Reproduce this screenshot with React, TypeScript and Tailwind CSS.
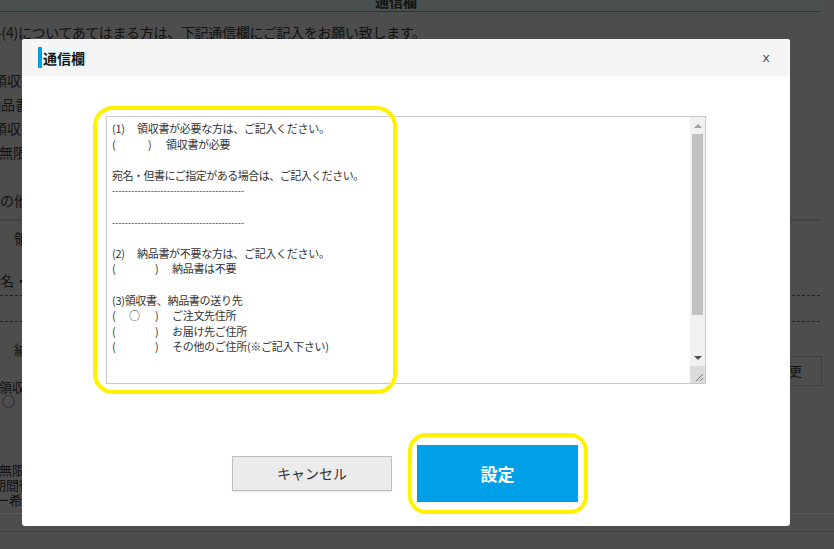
import React from "react";

const jp = "font-['Noto_Sans_CJK_JP','Noto_Sans',sans-serif]";

function Row({ h, className = "", children }: { h: string; className?: string; children?: React.ReactNode }) {
  return <div className={`flex items-center whitespace-nowrap ${h} ${className}`}>{children}</div>;
}

function Background() {
  return (
    <div className="flex flex-col w-[834px] h-[549px] text-[#121212] text-[14px]">
      <div className="w-[820px] h-[12px] bg-[#4a5050] border-b border-[#2f3232] overflow-hidden flex justify-center">
        <span className="font-bold text-[14px] leading-[14px] -mt-[6px] -ml-[28px]">通信欄</span>
      </div>
      <Row h="h-[24px]" className="mt-[8px] tracking-[-0.3px] -ml-[3px]">-(4)についてあてはまる方は、下記通信欄にご記入をお願い致します。</Row>
      <div className="h-[24px]" />
      <Row h="h-[24px]" className="-ml-[7px]">領収書</Row>
      <Row h="h-[24px]" className="-ml-[13px]">納品書</Row>
      <Row h="h-[24px]" className="-ml-[7px]">領収書</Row>
      <Row h="h-[24px]" className="-ml-[1px]">無限</Row>
      <div className="h-[24px]" />
      <Row h="h-[24px]" className="-ml-[14px]">その他</Row>
      <div className="mt-[7px] w-[820px] border-t-2 border-[#444]" />
      <Row h="h-[24px]" className="mt-[5px] pl-[14px]">領</Row>
      <div className="h-[18px]" />
      <Row h="h-[24px]" className="-ml-[14px]">宛名・但</Row>
      <div className="mt-[3px] w-[820px] border-t border-dashed border-[#222]" />
      <div className="mt-[25px] w-[820px] border-t border-dashed border-[#222]" />
      <div className="flex justify-between w-[822px] mt-[15px]">
        <Row h="h-[24px]" className="pl-[14px]">納</Row>
        <div className="mt-[19px] w-[64px] h-[30px] border border-[#3d3d3d] flex items-center justify-end pr-[19px] text-[13px] whitespace-nowrap">変更</div>
      </div>
      <div className="mt-[-6px] flex flex-col text-[13px] leading-[14px]">
        <span className="-ml-[1px]">領収</span>
        <span className="ml-[2px]">○</span>
      </div>
      <div className="mt-[54px] flex flex-col text-[13px] leading-[15px]">
        <span className="-ml-[1px]">無限</span>
        <span className="-ml-[7px]">期間後</span>
        <span className="-ml-[4px]">ー希</span>
      </div>
      <div className="mt-[6px] w-[834px] border-t border-[#5c5c5c]" />
      <div className="mt-[17px] w-[834px] border-t border-[#404040]" />
    </div>
  );
}

function Paren({ close, gap, mark, children }: { close: number; gap: number; mark?: string; children: React.ReactNode }) {
  return (
    <div className="flex">
      <span className="inline-block w-[17px]">(</span>
      <span className="inline-block" style={{ width: close - 17 }}>{mark ?? ""}</span>
      <span className="inline-block" style={{ width: gap - close }}>)</span>
      <span>{children}</span>
    </div>
  );
}

function Scrollbar() {
  return (
    <div className="w-[15px] flex flex-col bg-[#f1f1f1]">
      <div className="h-[17px] flex items-center justify-center">
        <div className="w-0 h-0 border-l-[4px] border-r-[4px] border-b-[4px] border-l-transparent border-r-transparent border-b-[#a3a3a3]" />
      </div>
      <div className="mx-[2px] h-[181px] bg-[#c1c1c1]" />
      <div className="flex-1" />
      <div className="h-[17px] flex items-center justify-center">
        <div className="w-0 h-0 border-l-[4px] border-r-[4px] border-t-[4px] border-l-transparent border-r-transparent border-t-[#505050]" />
      </div>
      <div className="h-[17px] bg-[#dcdcdc] flex items-end justify-end p-[1px]">
        <svg width="12" height="12" viewBox="0 0 12 12">
          <path d="M11 4 L4 11 M11 8 L8 11" stroke="#777" strokeWidth="1" />
        </svg>
      </div>
    </div>
  );
}

function TextBox() {
  const dash = "-----------------------------------------";
  return (
    <div className="w-[600px] h-[268px] border border-[#c9c9c9] flex bg-white">
      <div className={`flex-1 pl-[5px] pt-[4px] text-[11px] leading-[15.6px] text-[#333] whitespace-pre tracking-[-0.3px] ${jp}`}>
        <div className="flex"><span className="inline-block w-[25px]">(1)</span><span>領収書が必要な方は、ご記入ください。</span></div>
        <Paren close={36} gap={54}>領収書が必要</Paren>
        <div>&nbsp;</div>
        <div className="tracking-[-0.5px]">宛名・但書にご指定がある場合は、ご記入ください。</div>
        <div className="text-[9px] tracking-[0.1px]">{dash}</div>
        <div>&nbsp;</div>
        <div className="text-[9px] tracking-[0.1px]">{dash}</div>
        <div>&nbsp;</div>
        <div className="flex"><span className="inline-block w-[25px]">(2)</span><span>納品書が不要な方は、ご記入ください。</span></div>
        <Paren close={43} gap={60}>納品書は不要</Paren>
        <div>&nbsp;</div>
        <div>(3)領収書、納品書の送り先</div>
        <Paren close={43} gap={60} mark="○">ご注文先住所</Paren>
        <Paren close={43} gap={60}>お届け先ご住所</Paren>
        <Paren close={43} gap={60}>その他のご住所(※ご記入下さい)</Paren>
      </div>
      <Scrollbar />
    </div>
  );
}

export default function App() {
  return (
    <div className={`relative w-[834px] h-[549px] overflow-hidden bg-[#4d4d4d] ${jp}`}>
      <Background />
      <div className="absolute left-[22px] top-[39px] w-[768px] h-[487px] bg-white rounded-[3px] flex flex-col overflow-hidden">
        <div className="h-[37px] bg-[#f5f5f5] flex items-center pl-[16px] pr-[20px]">
          <div className="w-[4px] h-[21px] bg-[#00a0e9]" />
          <span className="ml-[1px] bg-[#ecf9fc] text-[14px] font-bold text-[#1a1a1a] leading-[20px]">通信欄</span>
          <div className="flex-1" />
          <span className="text-[13px] text-[#555] leading-none font-['DejaVu_Sans',sans-serif]">x</span>
        </div>
        <div className="pl-[84px] mt-[40px]">
          <TextBox />
        </div>
        <div className="mt-[61px] flex items-center justify-center gap-[25px] pr-[2px]">
          <button className="w-[160px] h-[35px] bg-[#ebebeb] border border-[#bdbdbd] text-[14px] text-[#333] shadow-[0_1px_1px_rgba(0,0,0,0.08)]">キャンセル</button>
          <button className="w-[161px] h-[57px] bg-[#00a0e8] text-[17px] font-bold text-white">設定</button>
        </div>
        <div className="absolute left-[71px] top-[67px] w-[304px] h-[288px] border-[4px] border-[#fff200] rounded-[20px]" />
        <div className="absolute left-[386px] top-[394px] w-[180px] h-[81px] border-[4px] border-[#fff200] rounded-[18px]" />
      </div>
    </div>
  );
}
